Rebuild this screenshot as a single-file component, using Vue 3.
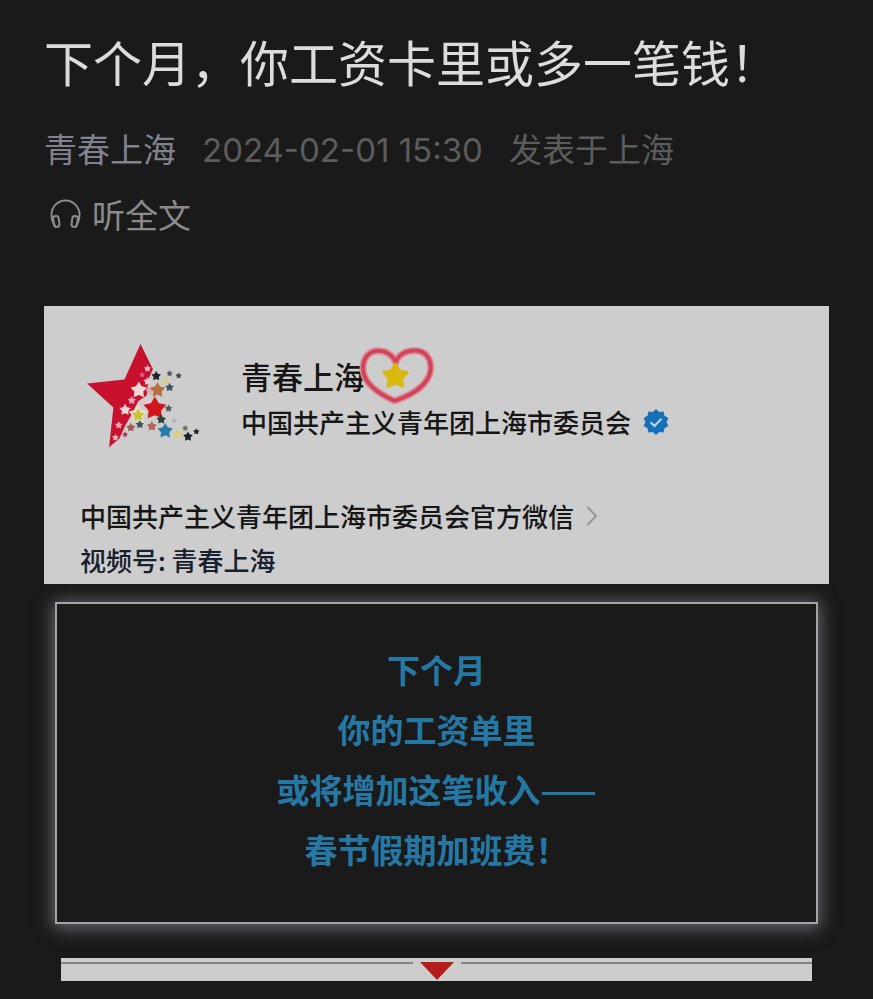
<template>
  <main class="article">
    <h1 class="title">下个月，你工资卡里或多一笔钱！</h1>

    <div class="meta">
      <a href="#" class="author">青春上海</a>
      <time class="date" datetime="2024-02-01T15:30">2024-02-01 15:30</time>
      <span>发表于上海</span>
    </div>

    <button type="button" class="listen">
      <svg class="headphones" viewBox="0 0 32 32" aria-hidden="true">
        <path
          d="M5 28C2.500 24 1.500 20 1.500 16.500a14 14 0 0 1 28 0c0 3.500-1 7.500-3.500 11.500"
        />
        <rect x="3.500" y="18" width="5.500" height="11" rx="2.700" transform="rotate(-8 6 23)" />
        <rect x="22" y="18" width="5.500" height="11" rx="2.700" transform="rotate(8 25 23)" />
      </svg>
      <span>听全文</span>
    </button>

    <section class="card">
      <div class="card-header">
        <svg class="logo" viewBox="50 40 350 320" role="img" aria-label="青春上海">
          <path
            class="logo-star"
            d="M213 43 L250 118 L236 150 L232 196 L206 214 L188 250 L166 290 L150 326 L119 352 L132 233 L53 161 L165 149 Z"
          />
          <polygon
            v-for="(star, index) in logoStars"
            :key="index"
            :points="starPoints(star.x, star.y, star.r)"
            :fill="star.color"
          />
        </svg>
        <div class="account">
          <div class="account-name">
            <span>青春上海</span>
            <svg class="heart" viewBox="380 28 244 190" aria-hidden="true">
              <path class="heart-glow" :d="heartPath" />
              <path class="heart-line" :d="heartPath" />
              <polygon
                :points="starPoints(497, 124, 40)"
                fill="#d9b90e"
                stroke="#d9b90e"
                stroke-width="6"
                stroke-linejoin="round"
              />
            </svg>
          </div>
          <div class="account-owner">
            <span>中国共产主义青年团上海市委员会</span>
            <svg class="badge" viewBox="0 0 26 26" role="img" aria-label="已认证">
              <polygon :points="badgePoints" />
              <path d="M7.500 13.200l4 3.800 7-7.200" />
            </svg>
          </div>
        </div>
      </div>
      <a href="#" class="card-line">
        <span>中国共产主义青年团上海市委员会官方微信</span>
        <svg class="chevron" viewBox="0 0 12 22" aria-hidden="true">
          <path d="M1.500 2l8.500 9-8.500 9" />
        </svg>
      </a>
      <a href="#" class="card-line channel">视频号: 青春上海</a>
    </section>

    <section class="notice">
      <p v-for="line in noticeLines" :key="line">{{ line }}</p>
    </section>

    <div class="divider">
      <span class="rule"></span>
      <svg class="arrow" viewBox="0 0 34 18" aria-hidden="true">
        <path d="M0 0h34L17 18z" />
      </svg>
      <span class="rule"></span>
    </div>
  </main>
</template>

<script setup>
const noticeLines = [
  "下个月",
  "你的工资单里",
  "或将增加这笔收入——",
  "春节假期加班费！",
];

const heartPath =
  "M498 82 C490 58 466 44 440 46 C410 49 394 76 399 110 C405 152 452 180 494 199 C548 182 600 150 605 104 C608 68 588 45 556 45 C526 45 504 60 498 82 Z";

const logoStars = [
  { x: 234, y: 117, r: 11, color: "#e6b9c3" },
  { x: 218, y: 135, r: 9, color: "#e5607a" },
  { x: 234, y: 155, r: 13, color: "#edcbd0" },
  { x: 208, y: 181, r: 26, color: "#f0d8d8" },
  { x: 240, y: 183, r: 14, color: "#e2a9b3" },
  { x: 187, y: 212, r: 13, color: "#e9a0b0" },
  { x: 230, y: 218, r: 16, color: "#e8c8cc" },
  { x: 167, y: 240, r: 18, color: "#efd5d8" },
  { x: 206, y: 254, r: 30, color: "#eadfc4" },
  { x: 206, y: 256, r: 20, color: "#c9c23a" },
  { x: 148, y: 286, r: 12, color: "#eaa9b5" },
  { x: 138, y: 323, r: 11, color: "#e5b0ba" },
  { x: 167, y: 314, r: 9, color: "#a8384a" },
  { x: 260, y: 139, r: 15, color: "#20262c" },
  { x: 300, y: 131, r: 10, color: "#565b5e" },
  { x: 327, y: 138, r: 10, color: "#45484a" },
  { x: 287, y: 154, r: 14, color: "#d5cc8a" },
  { x: 264, y: 181, r: 24, color: "#b5703f" },
  { x: 300, y: 173, r: 14, color: "#3f5563" },
  { x: 256, y: 236, r: 36, color: "#d11518" },
  { x: 297, y: 236, r: 12, color: "#55625c" },
  { x: 275, y: 269, r: 15, color: "#26413a" },
  { x: 211, y: 284, r: 13, color: "#39525c" },
  { x: 184, y: 293, r: 14, color: "#a05b51" },
  { x: 247, y: 289, r: 16, color: "#b5665c" },
  { x: 287, y: 303, r: 24, color: "#267fa8" },
  { x: 314, y: 273, r: 8, color: "#a9b2ad" },
  { x: 324, y: 313, r: 16, color: "#d8d07a" },
  { x: 347, y: 295, r: 10, color: "#77725c" },
  { x: 355, y: 320, r: 15, color: "#1b1e22" },
  { x: 380, y: 305, r: 10, color: "#202225" },
];

// Alterna radio exterior e interior alrededor del centro
const ringPoints = (x, y, outer, inner, tips) => {
  const points = [];
  for (let i = 0; i < tips * 2; i++) {
    const radius = i % 2 === 0 ? outer : inner;
    const angle = (Math.PI * i) / tips - Math.PI / 2;
    points.push(
      `${(x + radius * Math.cos(angle)).toFixed(1)},${(y + radius * Math.sin(angle)).toFixed(1)}`
    );
  }
  return points.join(" ");
};

const starPoints = (x, y, r) => ringPoints(x, y, r, r * 0.55, 5);

const badgePoints = ringPoints(13, 13, 13, 10.5, 10);
</script>

<style>
body {
  background: #1a1a1a;
}
</style>

<style scoped>
.article {
  box-sizing: border-box;
  min-height: 100vh;
  padding: 26px 44px 18px;
  background: #1a1a1a;
  color: #dcdcdc;
  font-family: "Noto Sans CJK SC", sans-serif;
}

a {
  color: inherit;
  text-decoration: none;
}

.title {
  margin: 0;
  font-size: 49px;
  font-weight: 400;
  line-height: 70px;
}

.meta {
  display: flex;
  flex-wrap: wrap;
  align-items: baseline;
  column-gap: 26px;
  margin-top: 27px;
  color: #5c5c5c;
  font-size: 33px;
  line-height: 50px;
}

.meta .author {
  color: #80838f;
}

.date {
  font-family: Inter, "Noto Sans CJK SC", sans-serif;
  font-size: 33px;
}

.listen {
  display: flex;
  align-items: center;
  gap: 10px;
  margin-top: 14px;
  padding: 0 6px;
  border: none;
  background: none;
  color: #8a8a8a;
  font-family: inherit;
  font-size: 33px;
  line-height: 50px;
  cursor: pointer;
}

.headphones {
  width: 32px;
  height: 32px;
  fill: none;
  stroke: currentColor;
  stroke-width: 2;
}

.card {
  position: relative;
  z-index: 1;
  margin-top: 67px;
  padding: 37px 36px 2px;
  background: #cdcdcd;
  color: #161616;
  font-size: 26px;
  font-weight: 500;
}

.card-header {
  display: flex;
  gap: 38px;
  margin-bottom: 44px;
  padding-left: 6px;
}

.logo {
  flex: none;
  width: 117px;
  height: 107px;
}

.logo-star {
  fill: #c8102f;
}

.account {
  padding-top: 10px;
  line-height: 46px;
}

.account-name {
  position: relative;
  width: max-content;
  font-size: 31px;
}

.heart {
  position: absolute;
  top: -8px;
  left: 116px;
  width: 80px;
  height: 62px;
}

.heart path {
  fill: none;
  stroke-linejoin: round;
}

.heart-glow {
  stroke: #dc8f9b;
  stroke-width: 22;
}

.heart-line {
  stroke: #d0455a;
  stroke-width: 12;
}

.account-owner {
  display: flex;
  align-items: center;
  gap: 12px;
}

.badge {
  flex: none;
  width: 26px;
  height: 26px;
  fill: #1670b8;
}

.badge path {
  fill: none;
  stroke: #b9d8ee;
  stroke-width: 2;
}

.card-line {
  display: flex;
  align-items: center;
  gap: 12px;
  line-height: 44px;
}

.channel {
  color: #16202e;
}

.chevron {
  flex: none;
  width: 12px;
  height: 22px;
  fill: none;
  stroke: #979797;
  stroke-width: 2;
}

.notice {
  margin: 18px 11px 0;
  padding: 35px 0 43px;
  border: 2px solid #a4a4a8;
  box-shadow: 0 2px 16px 2px #6a6a70;
  background: #1a1a1a;
  color: #2578a4;
  font-size: 33px;
  font-weight: 700;
  line-height: 60px;
  text-align: center;
}

.notice p {
  margin: 0;
}

.divider {
  display: flex;
  gap: 7px;
  margin: 34px 17px 0;
  padding: 4px 0 1px;
  background: #cdcdcd;
}

.rule {
  flex: 1;
  height: 2px;
  background: #858383;
}

.arrow {
  flex: none;
  width: 34px;
  height: 18px;
  fill: #b51d1b;
}
</style>
